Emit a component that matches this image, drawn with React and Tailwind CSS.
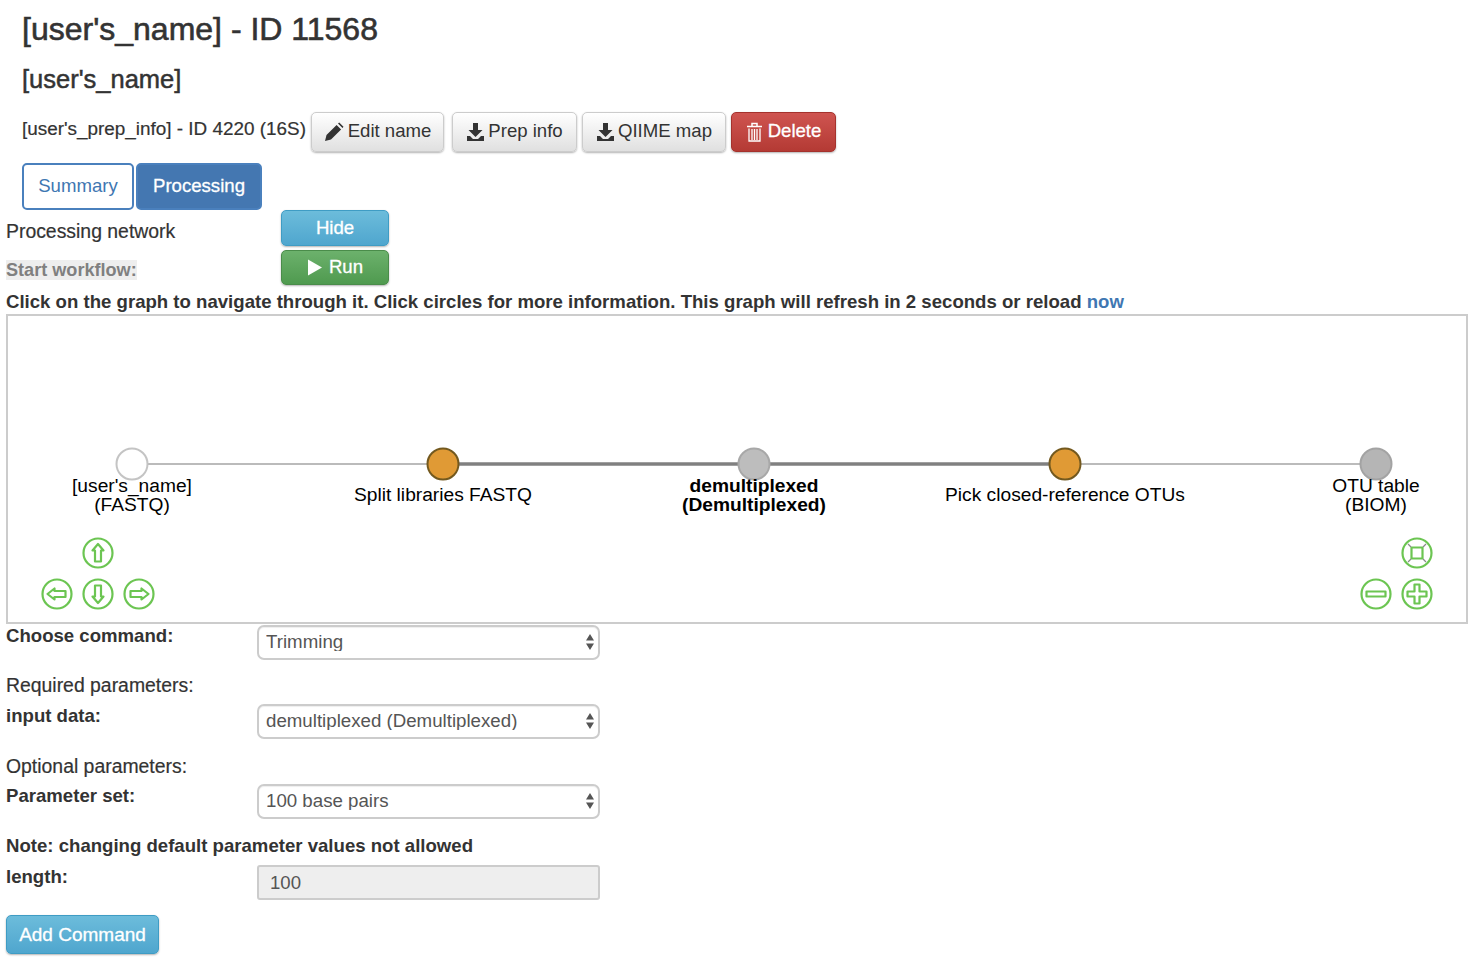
import React from 'react';

const BTN = 'flex items-center justify-center rounded-[5px] border pb-px text-[18.6px] leading-none shadow-[0_1px_2px_rgba(0,0,0,0.3)]';
const BTN_DEFAULT = 'border-[#ccc] bg-linear-to-b from-white to-[#e0e0e0] text-[#333]';
const BTN_INFO = 'border-[#3f9cc4] bg-linear-to-b from-[#6cbcdb] to-[#4fa6ce] text-white [-webkit-text-stroke:0.3px_white]';
const LABEL = 'text-[18.6px] font-bold leading-[22px] text-[#333]';
const PLAIN = 'text-[19.4px] leading-[22px] text-[#333] [-webkit-text-stroke:0.2px_#333]';

function PencilIcon() {
  return (
    <svg width="20" height="20" viewBox="0 0 20 20" className="mr-[4px]">
      <path d="M1 19l1.500-6L12.600 2.900l4.500 4.500L7 17.500z M14 1.500l1.200-1 4.300 4.300-1 1.200z" fill="#333" />
    </svg>
  );
}

function DownloadIcon({ className }) {
  return (
    <svg width="19" height="20" viewBox="0 0 19 20" className={className}>
      <path d="M7 1h5v7h4.500L9.500 15 2.500 8H7z M1 14h3l3 3h5l3-3h3v5H1z" fill="#333" />
    </svg>
  );
}

function TrashIcon() {
  return (
    <svg width="17" height="20" viewBox="0 0 17 20" className="mr-[5px]" fill="none" stroke="#fff">
      <path d="M1 4.500h15 M6 4V1.500h5V4" strokeWidth="1.500" />
      <path d="M3 6.500V19h11V6.500 M6 7v11 M8.500 7v11 M11 7v11" strokeWidth="1.300" />
    </svg>
  );
}

function PlayIcon() {
  return (
    <svg width="16" height="17" viewBox="0 0 16 17" className="mr-[6px]">
      <path d="M1 0.500l14 8-14 8z" fill="#fff" />
    </svg>
  );
}

function SelectBox({ value }) {
  return (
    <div className="relative h-[35px] w-[343px] rounded-[7px] border-2 border-[#ccc] bg-white shadow-[inset_0_1px_1px_rgba(0,0,0,0.07)]">
      <select
        defaultValue={value}
        className="h-full w-full appearance-none bg-transparent pb-px pl-[7px] text-[18.7px] leading-none text-[#555]"
      >
        <option>{value}</option>
      </select>
      <svg width="10" height="18" viewBox="0 0 10 18" className="absolute right-[3px] top-[6px]">
        <path d="M5 1l4 6.500H1z M5 17l-4-6.500h8z" fill="#555" />
      </svg>
    </div>
  );
}

function NavButton({ cx, cy, d }) {
  return (
    <g>
      <circle cx={cx} cy={cy} r="14.500" fill="#fff" stroke="#6cc552" strokeWidth="2.200" />
      <path d={d} transform={`translate(${cx} ${cy})`} fill="none" stroke="#6cc552" strokeWidth="2.200" strokeLinejoin="round" />
    </g>
  );
}

function GraphNode({ cx, fill, stroke, lines, bold, y }) {
  return (
    <g>
      <circle cx={cx} cy="464" r="15.500" fill={fill} stroke={stroke} strokeWidth="2" />
      <text
        textAnchor="middle"
        fontFamily="'Liberation Sans', Arial, sans-serif"
        fontSize="19.200"
        fontWeight={bold ? 700 : 400}
        fill="#000"
      >
        {lines.map((l, i) => (
          <tspan key={l} x={cx} y={y + i * 19}>{l}</tspan>
        ))}
      </text>
    </g>
  );
}

function Graph() {
  return (
    <div className="mt-[2px] h-[310px] w-[1462px] border-2 border-[#ccc] bg-white">
      <svg width="1458" height="306" viewBox="8 316 1458 306" className="block">
        <path d="M132 464H443" stroke="#bbb" strokeWidth="2" />
        <path d="M443 464H1065" stroke="#808080" strokeWidth="3.500" />
        <path d="M1065 464H1376" stroke="#bbb" strokeWidth="2" />
        <GraphNode cx={132} fill="#fff" stroke="#c4c4c4" lines={["[user's_name]", '(FASTQ)']} y={492} />
        <GraphNode cx={443} fill="#e09a35" stroke="#73591f" lines={['Split libraries FASTQ']} y={501} />
        <GraphNode cx={754} fill="#bdbdbd" stroke="#a8a8a8" lines={['demultiplexed', '(Demultiplexed)']} y={492} bold />
        <GraphNode cx={1065} fill="#e09a35" stroke="#73591f" lines={['Pick closed-reference OTUs']} y={501} />
        <GraphNode cx={1376} fill="#b5b5b5" stroke="#a3a3a3" lines={['OTU table', '(BIOM)']} y={492} />

        <NavButton cx={98} cy={553} d="M0-9L5.500-2.500H3V8.500H-3V-2.500H-5.500Z" />
        <NavButton cx={57} cy={594} d="M-9.500 0L-2.500-5.500V-3H8.500V3H-2.500V5.500Z" />
        <NavButton cx={98} cy={594} d="M0 9L5.500 2.500H3V-8.500H-3V2.500H-5.500Z" />
        <NavButton cx={139} cy={594} d="M9.500 0L2.500-5.500V-3H-8.500V3H2.500V5.500Z" />

        <NavButton cx={1417} cy={553} d="M-5.500-5.500H5.500V5.500H-5.500Z" />
        <path d="M1408 544l3 3 M1426 544l-3 3 M1408 562l3-3 M1426 562l-3-3" stroke="#8a8a8a" strokeWidth="1.300" />
        <NavButton cx={1376} cy={594} d="M-9.500-2.500H9.500V2.500H-9.500Z" />
        <NavButton cx={1417} cy={594} d="M-2.500-9.500H2.500V-2.500H9.500V2.500H2.500V9.500H-2.500V2.500H-9.500V-2.500H-2.500Z" />
      </svg>
    </div>
  );
}

export default function App() {
  return (
    <div className="h-[964px] w-[1480px] overflow-hidden bg-white font-['Liberation_Sans',Arial,sans-serif] text-[#333]">
      <div className="pl-[22px]">
        <h1 className="pt-[9px] pb-px text-[32px] leading-[40px] [-webkit-text-stroke:0.6px_#333]">[user's_name] - ID 11568</h1>
        <h2 className="mt-[13px] text-[25.500px] leading-[32px] [-webkit-text-stroke:0.5px_#333]">[user's_name]</h2>

        <div className="mt-[17px] flex h-[40px]">
          <span className="w-[289px] whitespace-nowrap pt-[6px] text-[18.900px] leading-[22px] [-webkit-text-stroke:0.2px_#333]">[user's_prep_info] - ID 4220 (16S)</span>
          <button className={`${BTN} ${BTN_DEFAULT} w-[133px]`}><PencilIcon />Edit name</button>
          <button className={`${BTN} ${BTN_DEFAULT} ml-[8px] w-[125px]`}><DownloadIcon className="mr-[3px]" />Prep info</button>
          <button className={`${BTN} ${BTN_DEFAULT} ml-[5px] w-[144px]`}><DownloadIcon className="mr-[3px]" />QIIME map</button>
          <button className={`${BTN} ml-[5px] w-[105px] border-[#a5322d] bg-linear-to-b from-[#cf5450] to-[#b43a34] text-white [-webkit-text-stroke:0.3px_white]`}><TrashIcon />Delete</button>
        </div>

        <div className="mt-[11px] flex h-[47px]">
          <a className="flex w-[112px] items-center justify-center rounded-[5px] border-2 border-[#4a80bd] bg-white pb-[2px] text-[18.600px] text-[#3f77b2]">Summary</a>
          <a className="ml-[2px] flex w-[126px] items-center justify-center rounded-[5px] border-2 border-[#4a80bd] bg-[#4477b1] pb-[2px] text-[18.600px] text-white [-webkit-text-stroke:0.3px_white]">Processing</a>
        </div>
      </div>

      <div className="pl-[6px]">
        <div className="flex h-[36px]">
          <span className={`w-[275px] pt-[10px] ${PLAIN}`}>Processing network</span>
          <button className={`${BTN} ${BTN_INFO} w-[108px] pt-px`}>Hide</button>
        </div>
        <div className="mt-[4px] flex h-[35px]">
          <div className="w-[275px] pt-[9px]">
            <span className="bg-[#eee] text-[18.100px] font-bold leading-[22px] text-[#808080]">Start workflow:</span>
          </div>
          <button className={`${BTN} w-[108px] border-[#4a8c4a] bg-linear-to-b from-[#6cb16c] to-[#4f9a4f] text-white [-webkit-text-stroke:0.3px_white]`}><PlayIcon />Run</button>
        </div>

        <p className={`mt-[6px] h-[21px] whitespace-nowrap ${LABEL}`}>
          Click on the graph to navigate through it. Click circles for more information. This graph will refresh in 2 seconds or reload <a className="text-[#3f77b2]">now</a>
        </p>

        <Graph />

        <div className="mt-px flex h-[35px]">
          <label className={`w-[251px] ${LABEL}`}>Choose command:</label>
          <SelectBox value="Trimming" />
        </div>
        <p className={`mt-[14px] ${PLAIN}`}>Required parameters:</p>
        <div className="mt-[8px] flex h-[35px]">
          <label className={`w-[251px] pt-px ${LABEL}`}>input data:</label>
          <SelectBox value="demultiplexed (Demultiplexed)" />
        </div>
        <p className={`mt-[16px] ${PLAIN}`}>Optional parameters:</p>
        <div className="mt-[7px] flex h-[35px]">
          <label className={`w-[251px] pt-px ${LABEL}`}>Parameter set:</label>
          <SelectBox value="100 base pairs" />
        </div>
        <p className={`mt-[16px] h-[21px] ${LABEL}`}>Note: changing default parameter values not allowed</p>
        <div className="mt-[9px] flex h-[35px]">
          <label className={`w-[251px] pt-px ${LABEL}`}>length:</label>
          <div className="flex h-[35px] w-[343px] items-center rounded-[3px] border-2 border-[#ccc] bg-[#eee] pl-[11px] pt-px text-[18.600px] text-[#555]">100</div>
        </div>
        <button className={`${BTN} ${BTN_INFO} mt-[15px] h-[39px] w-[153px] text-[19px]`}>Add Command</button>
      </div>
    </div>
  );
}
